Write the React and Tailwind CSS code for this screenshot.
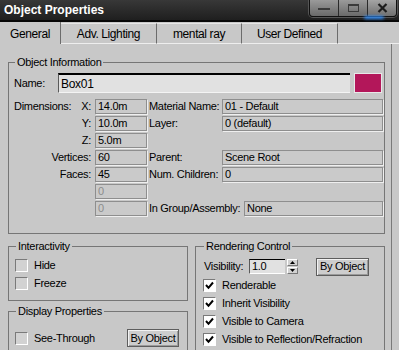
import React from 'react';

const Field = ({ value, dim, className = '' }) => (
  <div
    className={`h-[15px] border border-[#8e8e8e] shadow-[1px_1px_0_#efefef] bg-[#cacaca] pl-[2px] flex items-center whitespace-nowrap ${dim ? 'text-[#8c8c8c]' : 'text-black'} ${className}`}
  >
    {value}
  </div>
);

const Check = ({ checked }) => (
  <div
    className={`w-[13px] h-[13px] shrink-0 border border-t-[#7a7a7a] border-l-[#7a7a7a] border-b-white border-r-white flex items-center justify-center ${checked ? 'bg-white' : 'bg-[#d2d2d2]'}`}
  >
    {checked && (
      <svg width="9" height="9" viewBox="0 0 9 9">
        <path d="M1 4 L3.5 6.8 L8 1.5" stroke="#000" strokeWidth="2" fill="none" />
      </svg>
    )}
  </div>
);

const CheckRow = ({ label, checked }) => (
  <div className="flex items-center gap-[6px] h-[13px]">
    <Check checked={checked} />
    {label && <span>{label}</span>}
  </div>
);

const Group = ({ title, className = '', children }) => (
  <fieldset className={`border border-[#767676] ${className}`}>
    <legend className="ml-[1px] px-[2px] leading-[13px]">{title}</legend>
    {children}
  </fieldset>
);

const Btn = ({ children, className = '' }) => (
  <div className={`h-[18px] border border-[#5e5e5e] shadow-[inset_1px_1px_0_#f2f2f2,inset_-1px_-1px_0_#9a9a9a] bg-[#cdcdcd] flex items-center justify-center ${className}`}>
    {children}
  </div>
);

// one row of the object information grid
const InfoRow = ({ left, axis, value, dim, rightLabel, rightValue, rightW = 'w-[73px]' }) => (
  <div className="flex items-center h-[15px]">
    <div className="w-[77px] flex justify-between whitespace-nowrap">
      <span>{left}</span>
      <span>{axis}</span>
    </div>
    <Field value={value} dim={dim} className="ml-[4px] w-[52px]" />
    {rightLabel ? (
      <>
        <span className={`ml-[2px] whitespace-nowrap ${rightW}`}>{rightLabel}</span>
        <Field value={rightValue} className="flex-1" />
      </>
    ) : null}
  </div>
);

export default function App() {
  return (
    <div className="w-[399px] h-[350px] overflow-hidden bg-[#c8c8c8] font-['Liberation_Sans',Arial,sans-serif] text-[11px] tracking-[-0.3px] leading-none text-black flex flex-col relative">
      {/* Title bar */}
      <div className="h-[22px] shrink-0 bg-gradient-to-b from-[#383838] to-[#1f1f1f] border-b-2 border-[#070707] flex items-start justify-between pl-[4px] pr-[2px]">
        <span className="text-white font-bold text-[12px] tracking-normal mt-[4px]">Object Properties</span>
        <div className="flex h-[17px] border border-t-0 border-[#111] rounded-b-[4px] overflow-hidden shadow-[0_0_0_1px_#555]">
          <div className="w-[29px] bg-gradient-to-b from-[#9a9a9a] to-[#6a6a6a] border-r border-[#2a2a2a] flex items-center justify-center">
            <div className="w-[12px] h-[2px] bg-[#3a3a3a] mt-[2px]" />
          </div>
          <div className="w-[29px] bg-gradient-to-b from-[#9a9a9a] to-[#6a6a6a] border-r border-[#2a2a2a] flex items-center justify-center">
            <div className="w-[11px] h-[8px] border border-[#3a3a3a] border-t-2" />
          </div>
          <div className="w-[28px] bg-gradient-to-b from-[#a4a4a4] to-[#707070] flex items-center justify-center">
            <svg width="11" height="10" viewBox="0 0 11 10">
              <path d="M1.5 1 L9.5 9 M9.5 1 L1.5 9" stroke="#1c1c1c" strokeWidth="2.2" />
            </svg>
          </div>
        </div>
      </div>
      <div className="absolute left-[364px] top-[16px] w-[20px] h-[3px] rounded-full bg-[#2f8fff] blur-[1.5px]" />

      {/* Tabs */}
      <div className="h-[22px] shrink-0 flex items-end text-[12px] tracking-[-0.4px]">
        <div className="w-[61px] h-[22px] border-r border-[#6c6c6c] flex items-center justify-center pt-[2px]">General</div>
        <div className="w-[96px] h-[21px] border-t border-t-[#e6e6e6] border-r border-r-[#6c6c6c] border-b border-b-[#eeeeee] flex items-center justify-center">Adv. Lighting</div>
        <div className="w-[85px] h-[21px] border-t border-t-[#e6e6e6] border-r border-r-[#6c6c6c] border-b border-b-[#eeeeee] flex items-center justify-center">mental ray</div>
        <div className="w-[96px] h-[21px] border-t border-t-[#e6e6e6] border-r border-r-[#6c6c6c] border-b border-b-[#eeeeee] flex items-center justify-center">User Defined</div>
        <div className="flex-1 border-b border-[#eeeeee]" />
      </div>

      {/* Panel */}
      <div className="flex-1 w-[392px] border-r border-[#7a7a7a] pl-[8px] pt-[12px]">
        <Group title="Object Information" className="w-[377px] pl-[5px] pr-[1px] pb-[17px]">
          <div className="flex items-center h-[20px] mt-[4px]">
            <span className="w-[44px]">Name:</span>
            <div className="w-[292px] h-[20px] bg-[#e1e1e1] border-t-2 border-t-black border-l border-l-[#5a5a5a] border-b border-b-[#f4f4f4] pl-[2px] flex items-center text-[12px]">Box01</div>
            <div className="ml-[4px] w-[28px] h-[20px] bg-[#b3175a] border border-[#e8e8e8]" />
          </div>
          <div className="flex flex-col gap-[2px] mt-[6px]">
            <InfoRow left="Dimensions:" axis="X:" value="14.0m" rightLabel="Material Name:" rightValue="01 - Default" />
            <InfoRow axis="Y:" value="10.0m" rightLabel="Layer:" rightValue="0 (default)" />
            <InfoRow axis="Z:" value="5.0m" />
            <InfoRow axis="Vertices:" value="60" rightLabel="Parent:" rightValue="Scene Root" />
            <InfoRow axis="Faces:" value="45" rightLabel="Num. Children:" rightValue="0" />
            <InfoRow value="0" dim />
            <InfoRow value="0" dim rightLabel="In Group/Assembly:" rightValue="None" rightW="w-[95px]" />
          </div>
        </Group>

        <div className="flex mt-[6px] gap-[7px]">
          <div className="w-[180px] flex flex-col gap-[4px]">
            <Group title="Interactivity" className="pl-[6px] pb-[10px]">
              <div className="flex flex-col gap-[5px] mt-[6px]">
                <CheckRow label="Hide" />
                <CheckRow label="Freeze" />
              </div>
            </Group>
            <Group title="Display Properties" className="pl-[6px] pr-[8px] pb-[10px]">
              <div className="flex items-center justify-between mt-[11px] h-[18px]">
                <CheckRow label="See-Through" />
                <Btn className="w-[52px]">By Object</Btn>
              </div>
              <div className="mt-[3px]">
                <CheckRow />
              </div>
            </Group>
          </div>

          <Group title="Rendering Control" className="w-[190px] pl-[7px]">
            <div className="flex items-center h-[17px] mt-[5px]">
              <span className="ml-[1px] w-[45px]">Visibility:</span>
              <div className="w-[36px] h-[15px] bg-[#e1e1e1] border-t border-t-black border-l border-l-[#5a5a5a] border-b border-b-white pl-[2px] flex items-center">1.0</div>
              <div className="ml-[2px] w-[11px] h-[15px] flex flex-col gap-[1px]">
                <div className="flex-1 bg-[#d2d2d2] border border-t-white border-l-white border-b-[#777] border-r-[#777] flex items-center justify-center">
                  <svg width="5" height="3" viewBox="0 0 5 3"><path d="M0 3 L2.5 0 L5 3 Z" fill="#000" /></svg>
                </div>
                <div className="flex-1 bg-[#d2d2d2] border border-t-white border-l-white border-b-[#777] border-r-[#777] flex items-center justify-center">
                  <svg width="5" height="3" viewBox="0 0 5 3"><path d="M0 0 L2.5 3 L5 0 Z" fill="#000" /></svg>
                </div>
              </div>
              <Btn className="ml-[18px] w-[53px] h-[17px]">By Object</Btn>
            </div>
            <div className="flex flex-col gap-[5px] mt-[4px] pb-[10px]">
              <CheckRow label="Renderable" checked />
              <CheckRow label="Inherit Visibility" checked />
              <CheckRow label="Visible to Camera" checked />
              <CheckRow label="Visible to Reflection/Refraction" checked />
              <CheckRow checked />
            </div>
          </Group>
        </div>
      </div>
    </div>
  );
}
